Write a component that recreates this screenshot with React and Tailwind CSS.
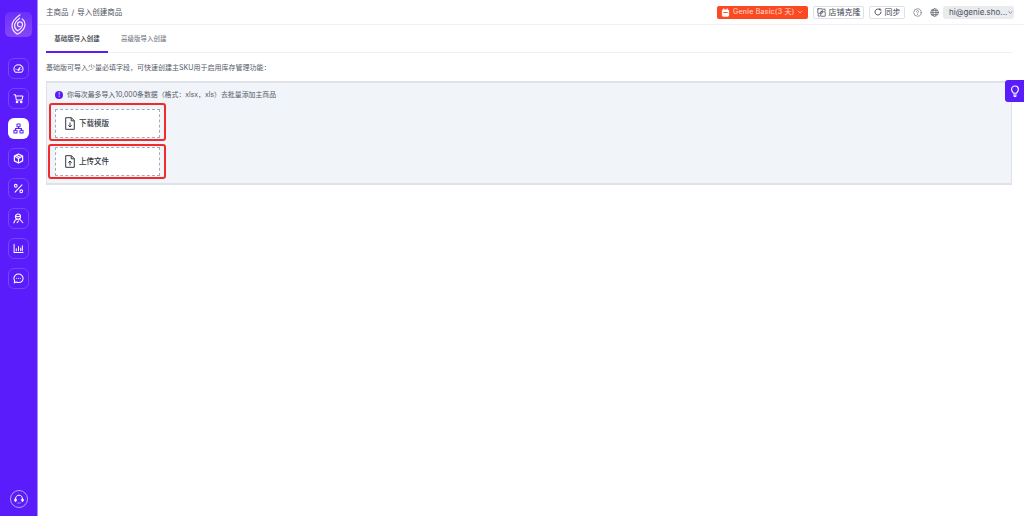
import { ChevronDown } from "lucide-react";

// sidebar + toolbar glyphs, all drawn on a 12x12 box
function Glyph({ size = 11, color = "#ffffff", width = 1.1, children }) {
  return (
    <svg width={size} height={size} viewBox="0 0 12 12" fill="none" stroke={color} strokeWidth={width} strokeLinecap="round" strokeLinejoin="round">
      {children}
    </svg>
  );
}

const NAV = [
  <>
    <path d="M2.6 10 C1.4 9 1 7.9 1 6.8 C1 4 3.2 2 6 2 C8.8 2 11 4 11 6.8 C11 7.9 10.6 9 9.4 10 Z" />
    <path d="M6 7.2 L7.8 4.8 M3.2 6.8 H3.4 M8.7 6.8 H8.9" />
    <circle cx="6" cy="7.4" r=".7" />
  </>,
  <>
    <path d="M1 1.8 H2.6 L3.6 7.6 H9.8 L10.8 3.4 H3" />
    <circle cx="4.4" cy="9.8" r=".9" fill="#ffffff" />
    <circle cx="9" cy="9.8" r=".9" fill="#ffffff" />
  </>,
  <>
    <rect x="4.3" y="1" width="3.4" height="3.2" rx=".5" />
    <rect x="1" y="7.8" width="3.4" height="3.2" rx=".5" />
    <rect x="7.6" y="7.8" width="3.4" height="3.2" rx=".5" />
    <path d="M6 4.2 V6 M2.7 7.8 V6 H9.3 V7.8" />
  </>,
  <>
    <path d="M6 1 L10.5 3.4 V8.6 L6 11 L1.5 8.6 V3.4 Z" strokeWidth="1.3" />
    <path d="M1.8 3.6 L6 6 L10.2 3.6 M6 6 V10.6 M3.6 2.4 L8 5" strokeWidth="1.2" />
  </>,
  <>
    <path d="M9.8 2 L2.2 10" />
    <circle cx="3" cy="3" r="1.5" />
    <circle cx="9" cy="9" r="1.5" />
  </>,
  <>
    <circle cx="5.4" cy="4" r="2.8" />
    <path d="M1 10.8 C1.4 8.6 2.8 7.2 4.4 6.8 M7 6.4 L10.8 10.6 M2.8 3 C4.4 4.4 6.4 4.4 8 3.2 M6 8.6 L4.4 10.6" />
  </>,
  <>
    <path d="M1.2 1.4 V10.4 H11" />
    <path d="M3.6 8.4 V6.2 M6 8.4 V3.8 M8.4 8.4 V5.4 M10.2 8.4 V3" />
  </>,
  <>
    <path d="M6 1.2 C8.9 1.2 11 3.2 11 5.8 C11 8.4 8.9 10.4 6 10.4 C5 10.4 4 10.2 3.2 9.8 L1.4 10.8 L1.8 8.6 C1.2 7.8 1 6.8 1 5.8 C1 3.2 3.1 1.2 6 1.2 Z" />
    <path d="M4 5.8 H4.1 M6 5.8 H6.1 M8 5.8 H8.1" />
  </>,
];

function Logo() {
  return (
    <svg width="15" height="21" viewBox="0 0 15 21" fill="none" stroke="#efe8ff" strokeWidth="1.25" strokeLinecap="round" strokeLinejoin="round">
      <path d="M9 .8 C4.5 4 1 7.4 1 11.8 C1 15.8 3.6 18.6 6.4 20.2 C10.6 17.8 14 14.8 14 10.4 C14 8 12.8 6.2 11.2 5" />
      <path d="M8.6 4.2 C6 6.2 3.6 8.6 3.6 11.8 C3.6 14 4.8 15.7 6.6 16.8 C9.4 15 11.5 13 11.5 10.4 C11.5 8.8 10.4 7.8 9 7.8 C7.5 7.8 6.5 9 6.5 10.5 C6.5 12 7.6 12.8 9 12.4" />
    </svg>
  );
}

function Sidebar() {
  return (
    <aside className="w-[38px] shrink-0 bg-[#5a1cfb] border-r border-[#a98cfd] flex flex-col items-center pt-[12px] pb-[8px]">
      <div className="w-[27px] h-[25px] rounded-[5px] bg-gradient-to-b from-[#6a2ffb] to-[#8745f6] flex items-center justify-center">
        <Logo />
      </div>
      <nav className="mt-[21px] flex flex-col gap-[9px]">
        {NAV.map((glyph, i) =>
          i === 2 ? (
            <div key={i} className="w-[21px] h-[21px] rounded-[6px] bg-white flex items-center justify-center">
              <Glyph color="#5a1cfb">{glyph}</Glyph>
            </div>
          ) : (
            <div key={i} className="w-[21px] h-[21px] rounded-[6px] border border-[#7446fb] flex items-center justify-center">
              <Glyph>{glyph}</Glyph>
            </div>
          )
        )}
      </nav>
      <div className="mt-auto w-[18px] h-[18px] rounded-full border border-[#b79ffd] flex items-center justify-center">
        <Glyph size={12} width={1}>
          <path d="M2.6 7 V5.6 C2.6 3.6 4 2.2 6 2.2 C8 2.2 9.4 3.6 9.4 5.6 V7" />
          <rect x="1.8" y="5.8" width="1.4" height="2.6" rx=".5" fill="#ffffff" />
          <rect x="8.8" y="5.8" width="1.4" height="2.6" rx=".5" fill="#ffffff" />
          <path d="M5 10 H5.1 M7 10 H7.1" />
        </Glyph>
      </div>
    </aside>
  );
}

function Header() {
  return (
    <header className="h-[25px] shrink-0 border-b border-[#eef0f3] flex items-center pl-[8px] pr-[10px]">
      <div className="pt-[1px] text-[7.5px] text-[#4b5160] flex gap-[3px]">
        <span>主商品</span>
        <span>/</span>
        <span>导入创建商品</span>
      </div>
      <div className="ml-auto flex items-center">
        <div className="w-[91px] h-[13px] rounded-[2px] bg-[#fb4a21] text-white/80 text-[7px] flex items-center pl-[4px] pr-[4px]">
          <Glyph size={9} width={1.2}>
            <rect x="1.8" y="2.6" width="8.4" height="8.4" rx="1" fill="#ffffff" />
            <path d="M3.8 1 V3 M8.2 1 V3" />
            <path d="M3.6 6 H8.4" stroke="#fb4a21" />
          </Glyph>
          <span className="ml-[3px] whitespace-nowrap tracking-[.25px]">Genie Basic(3 天)</span>
          <ChevronDown size={8} className="ml-auto shrink-0" />
        </div>
        <div className="ml-[5px] w-[51px] h-[13px] rounded-[2px] border border-[#dde1ea] text-[8px] text-[#3e4352] flex items-center justify-center gap-[3px]">
          <Glyph size={9} color="#555b69">
            <rect x="1" y="1" width="6" height="6" rx=".4" />
            <rect x="5" y="5" width="6" height="6" rx=".4" />
            <path d="M8.5 1.5 H10.8 V3.5 M1.5 8.5 V10.8 H3.5" />
          </Glyph>
          <span>店铺克隆</span>
        </div>
        <div className="ml-[5px] w-[36px] h-[13px] rounded-[2px] border border-[#dde1ea] text-[8px] text-[#3e4352] flex items-center justify-center gap-[3px]">
          <Glyph size={8} color="#3e4352" width={1.4}>
            <path d="M10.5 6 A4.5 4.5 0 1 1 8.6 2.3 M8.8 1 V3 H10.6" />
          </Glyph>
          <span>同步</span>
        </div>
        <span className="ml-[8px]">
          <Glyph size={9} color="#777c88" width={1}>
            <circle cx="6" cy="6" r="5" />
            <path d="M4.6 4.8 C4.6 3.9 5.2 3.4 6 3.4 C6.8 3.4 7.4 3.9 7.4 4.7 C7.4 5.8 6 5.8 6 7 M6 8.7 H6.1" />
          </Glyph>
        </span>
        <span className="ml-[8px]">
          <Glyph size={9} color="#666b78" width={1}>
            <circle cx="6" cy="6" r="5" />
            <ellipse cx="6" cy="6" rx="2.2" ry="5" />
            <path d="M1 6 H11 M1.8 3.4 H10.2 M1.8 8.6 H10.2" />
          </Glyph>
        </span>
        <div className="ml-[4px] w-[71px] h-[13px] rounded-[3px] bg-[#e9ebee] text-[8px] text-[#4b5160] flex items-center pl-[6px]">
          <span className="whitespace-nowrap">hi@genie.sho...</span>
          <ChevronDown size={7} />
        </div>
      </div>
    </header>
  );
}

function FileBox({ up, label, className }) {
  return (
    <div className={className}>
      <div className="w-[105px] h-[29px] bg-white border border-dashed border-[#a5acb8] flex items-center pl-[9px] gap-[4px]">
        <svg width="10" height="13" viewBox="0 0 10 13" fill="none" stroke="#333845" strokeWidth="1">
          <path d="M1 .7 H6.4 L9.3 3.6 V12.3 H.7 V.7 Z M6.2 .7 V3.8 H9.3" strokeLinejoin="round" />
          {up ? <path d="M5 10.5 V6 M3.3 7.7 L5 6 L6.7 7.7" /> : <path d="M5 5.5 V10 M3.3 8.3 L5 10 L6.7 8.3" />}
        </svg>
        <span className="text-[7.5px] font-medium text-[#333845]">{label}</span>
      </div>
    </div>
  );
}

export default function App() {
  return (
    <div className="relative w-[1024px] h-[516px] overflow-hidden flex bg-white font-['Inter','Noto_Sans_CJK_SC',sans-serif]">
      <Sidebar />
      <main className="flex-1 min-w-0 flex flex-col">
        <Header />
        <div className="pl-[8px] pr-[12px]">
          <div className="h-[28px] border-b border-[#f0f1f4] flex text-[6.5px]">
            <div className="w-[62px] pt-[3px] border-b-2 border-[#5a1cfb] -mb-px flex items-center justify-center font-medium text-[#333845]">
              基础版导入创建
            </div>
            <div className="ml-[13px] pt-[3px] flex items-center text-[#666b78]">高级版导入创建</div>
          </div>
          <p className="mt-[9px] text-[7px] leading-[12px] text-[#555b69]">
            {"基础版可导入少量必填字段\uFF0C可快速创建主SKU用于启用库存管理功能\uFF1A"}
          </p>
          <section className="mt-[7px] h-[104px] bg-[#f1f4f8] border border-[#dfe3e9] border-t-2 border-b-2 pl-[2px]">
            <div className="h-[20px] pt-[4px] pl-[6px] flex items-center gap-[4px] text-[6.9px] text-[#555b69]">
              <span className="w-[8px] h-[8px] rounded-full bg-[#5a1cfb] text-white text-[6px] leading-none flex items-center justify-center">!</span>
              <span>{"你每次最多导入10,000条数据\uFF08格式\uFF1Axlsx\uFF0Cxls\uFF09去批量添加主商品"}</span>
            </div>
            <FileBox
              label="下载模版"
              className="w-[117px] h-[38px] border-2 border-[#ef2b2b] rounded-[3px] pl-[4px] pt-[4px]"
            />
            <FileBox
              up
              label="上传文件"
              className="mt-[3px] -ml-px w-[118px] h-[35px] border-2 border-[#ef2b2b] rounded-[3px] pl-[5px] pt-[1px]"
            />
          </section>
        </div>
      </main>
      <div className="absolute right-0 top-[80px] w-[19px] h-[22px] rounded-l-[3px] bg-[#5a1cfb] flex items-center justify-center">
        <Glyph size={12} width={1.1}>
          <path d="M4.4 8.2 C4.2 7.2 2.6 6.4 2.6 4.4 C2.6 2.5 4.1 1 6 1 C7.9 1 9.4 2.5 9.4 4.4 C9.4 6.4 7.8 7.2 7.6 8.2 Z M4.6 10 H7.4 M5.2 11.4 H6.8" />
        </Glyph>
      </div>
    </div>
  );
}
